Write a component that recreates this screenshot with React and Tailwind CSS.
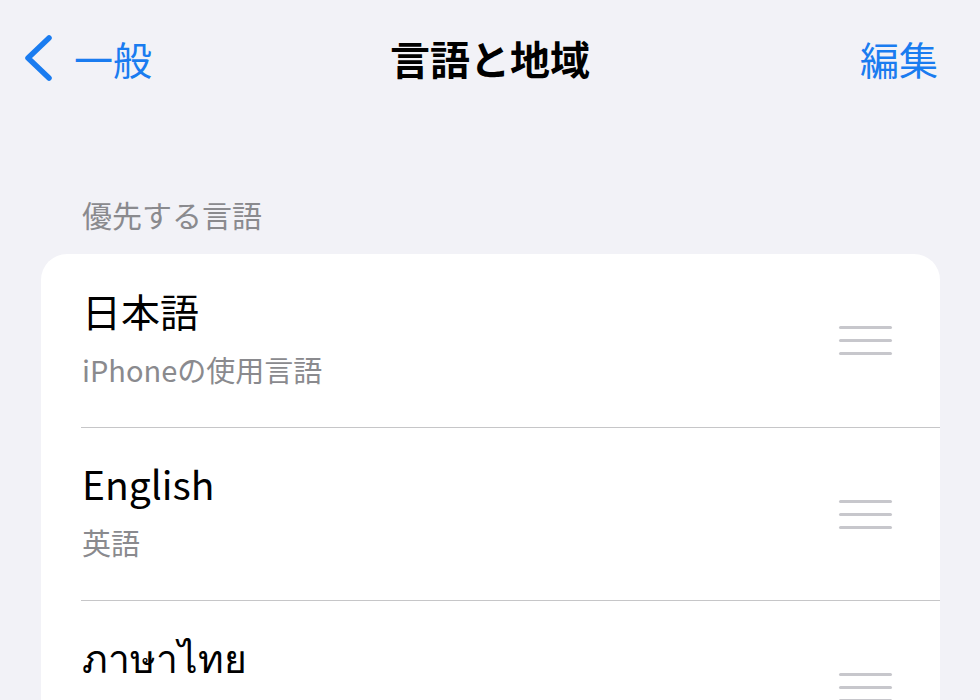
import React from 'react';

const FONT = { fontFamily: '"Noto Sans CJK JP", "Noto Sans", "DejaVu Sans", sans-serif' };

const languages = [
  { name: '日本語', note: 'iPhoneの使用言語' },
  { name: 'English', note: '英語' },
  { name: 'ภาษาไทย', note: 'タイ語' },
];

const Grabber = () => (
  <div className="flex flex-col gap-[10px] w-[53px]">
    <div className="h-[3px] rounded-full bg-[#c7c7cc]" />
    <div className="h-[3px] rounded-full bg-[#c7c7cc]" />
    <div className="h-[3px] rounded-full bg-[#c7c7cc]" />
  </div>
);

const App = () => {
  return (
    <div className="w-[980px] h-[700px] overflow-hidden bg-[#f2f2f7]" style={FONT}>
      {/* Nav bar */}
      <div className="grid grid-cols-[1fr_auto_1fr] items-center h-[120px] px-[42px] pb-[4px]">
        <div className="flex items-center gap-[20px] -ml-[20px] text-[#1a7cf0]">
          <svg width="32" height="48" viewBox="0 0 32 48" fill="none">
            <path d="M27 4 L6 24 L27 44" stroke="#1a7cf0" strokeWidth="5.5" strokeLinecap="round" strokeLinejoin="round" />
          </svg>
          <span className="text-[39px] leading-none">一般</span>
        </div>
        <div className="text-center text-[40px] font-bold leading-none text-black">言語と地域</div>
        <div className="text-right text-[39px] leading-none text-[#1a7cf0]">編集</div>
      </div>

      {/* Section header */}
      <div className="pl-[82px] pt-[75px] pb-[21px] text-[30px] leading-[38px] text-[#8a8a8e]">
        優先する言語
      </div>

      {/* Language list */}
      <div className="ml-[41px] w-[899px] bg-white rounded-t-[26px]">
        {languages.map((lang, i) => (
          <div key={lang.name} className="pl-[40px]">
            <div className={`flex items-center h-[173px] pr-[48px] ${i > 0 ? 'border-t border-[#c6c6c8]' : ''}`}>
              <div className="flex-1 flex flex-col pb-[8px] pl-[1px]">
                <span className="text-[39px] leading-[48px] text-black">{lang.name}</span>
                <span className="mt-[16px] text-[29px] leading-[38px] text-[#8a8a8e]">{lang.note}</span>
              </div>
              <Grabber />
            </div>
          </div>
        ))}
      </div>
    </div>
  );
};

export default App;
